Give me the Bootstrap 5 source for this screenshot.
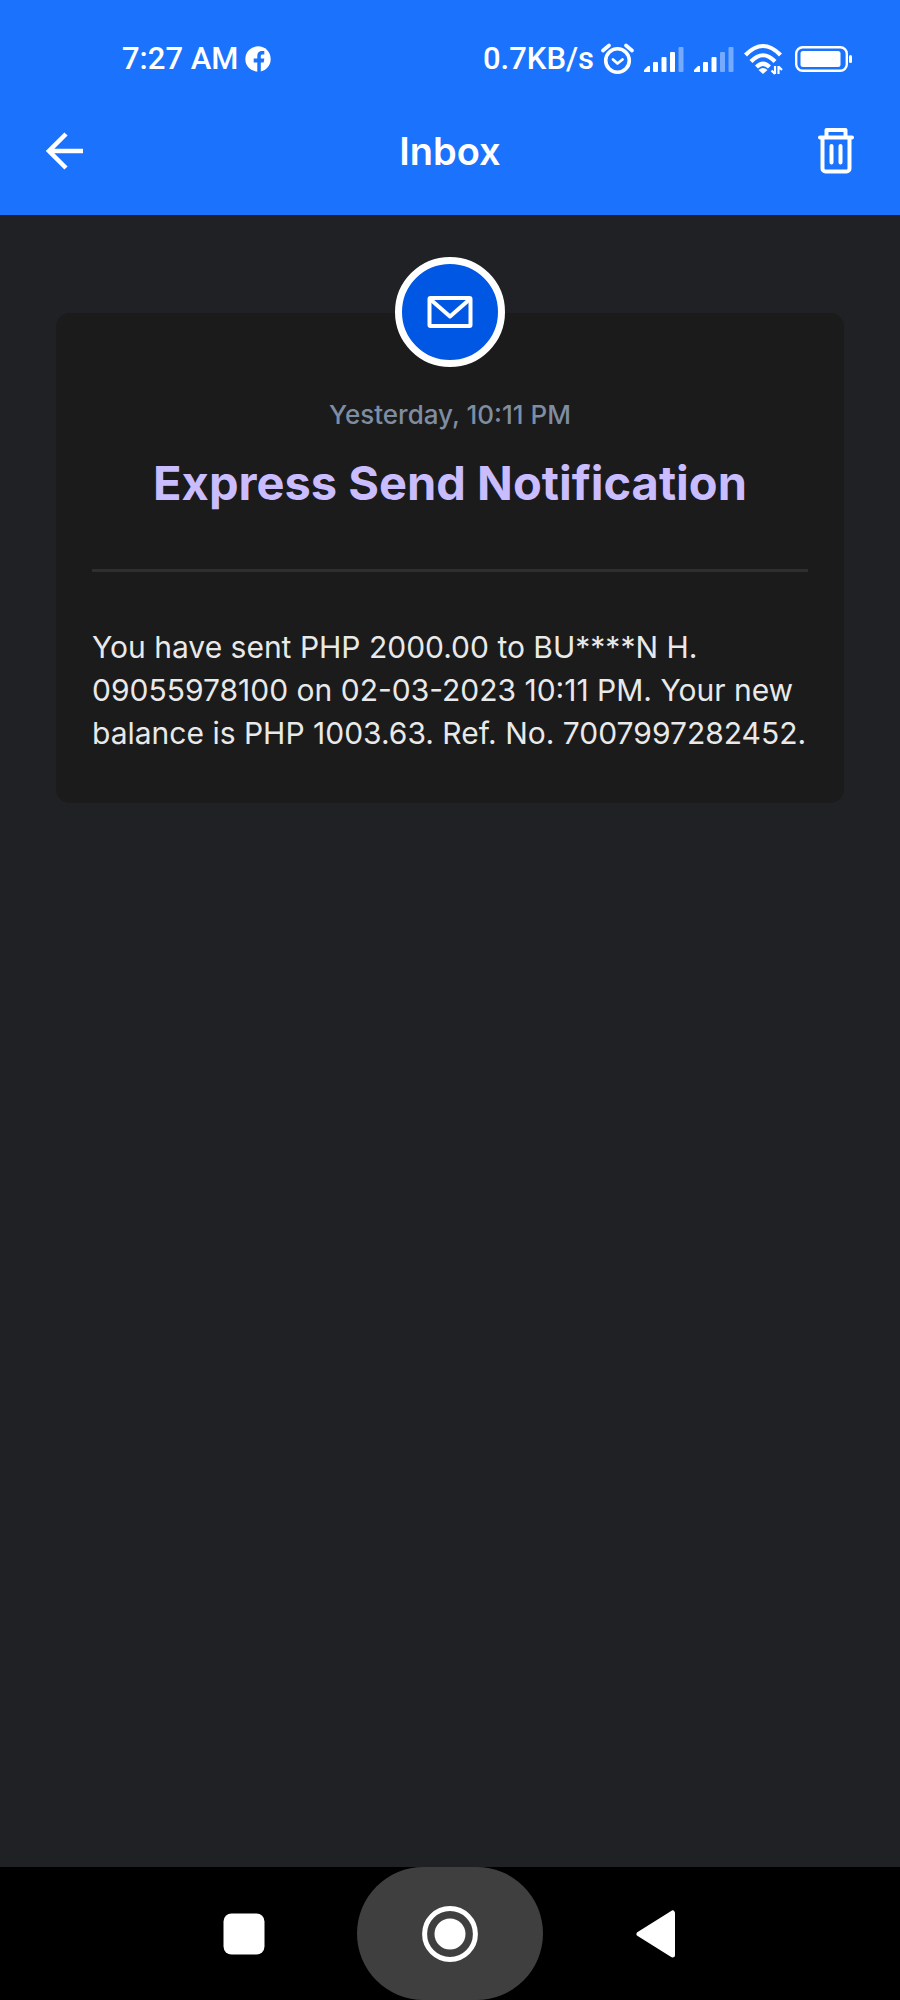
<!DOCTYPE html>
<html lang="en">
<head>
<meta charset="utf-8">
<meta name="viewport" content="width=device-width, initial-scale=1">
<title>Inbox</title>
<link href="https://cdn.jsdelivr.net/npm/bootstrap@5.3.0/dist/css/bootstrap.min.css" rel="stylesheet">
<style>
  body { background: #202124; font-family: Inter, "Liberation Sans", sans-serif; }
  svg { display: block; flex: none; }
  .top-area { background: #1a72fd; color: #fff; }
  .status-bar { padding: 31px 48px 0 122px; font: 500 31px/56px Roboto, "Liberation Sans", sans-serif; }
  .status-group { gap: 10px; }
  .status-text { margin-right: -3px; }
  .title-bar { display: grid; grid-template-columns: 1fr auto 1fr; height: 128px; padding: 0 46px; }
  .title-bar h1 { font-size: 38px; line-height: 44px; font-weight: 600; }
  .plain-btn { background: none; border: 0; padding: 0; color: inherit; }
  .message-area { padding: 98px 56px 48px; }
  .message-card { display: flow-root; background: #1b1b1b; border-radius: 14px; padding: 0 36px 48px; }
  .mail-badge { width: 110px; height: 110px; margin-top: -56px; background: #0057e4; border: 7px solid #fff; }
  .message-date { color: #7f8da3; font-size: 26px; line-height: 32px; font-weight: 500; margin-top: 32px; }
  .message-title { color: #c9bcff; font-size: 47px; line-height: 56px; font-weight: 700; margin-top: 24px; }
  .message-rule { border-top: 3px solid #2f2f2f; opacity: 1; margin: 58px 0 54px; }
  .message-text { color: #e9e9ea; font-size: 30px; line-height: 43px; }
  .system-nav { background: #000; height: 133px; gap: 20px; }
  .system-nav button { width: 186px; }
  .system-nav .pressed { background: #3f3f3f; border-radius: 67px; }
</style>
</head>
<body>
<div class="d-flex flex-column min-vh-100">
  <header class="top-area">
    <div class="status-bar d-flex justify-content-between">
      <div class="status-group d-flex align-items-center">
        <span class="status-text">7:27 AM</span>
        <svg width="26" height="26" viewBox="0 0 26 26" role="img" aria-label="Facebook"><circle cx="13" cy="13" r="12.7" fill="#fff"/><path d="M12.300 26v-9.500H8.700v-4h3.600V10c0-3.600 2-5 4.800-5h2.200v3.500h-1.700c-1.200 0-1.800.6-1.800 1.800v2.200h3.500l-.6 4h-2.900V26z" fill="#1a72fd"/></svg>
      </div>
      <div class="status-group d-flex align-items-center">
        <span class="status-text">0.7KB/s</span>
        <svg width="33" height="32" viewBox="0 0 33 32" fill="none" stroke="#fff" stroke-linecap="round" stroke-linejoin="round" aria-hidden="true"><circle cx="16.500" cy="17.500" r="11.800" stroke-width="3.600"/><path d="M2 7.500 8 2.500M31 7.500 25 2.500" stroke-width="3.600"/><path d="m12 16.500 4.500 4 5-4" stroke-width="2.800"/></svg>
        <svg width="40" height="28" viewBox="0 0 40 28" fill="#fff" aria-hidden="true"><path d="M0 27v-2l4-4h2v6z"/><rect x="9" y="17" width="5" height="10" rx="1"/><rect x="17.500" y="12" width="5" height="15" rx="1"/><rect x="26" y="7" width="5" height="20" rx="1"/><rect x="34.500" y="2" width="5" height="25" rx="1" opacity=".4"/></svg>
        <svg width="40" height="28" viewBox="0 0 40 28" fill="#fff" aria-hidden="true"><path d="M0 27v-2l4-4h2v6z"/><rect x="9" y="17" width="5" height="10" rx="1"/><rect x="17.500" y="12" width="5" height="15" rx="1"/><rect x="26" y="7" width="5" height="20" rx="1" opacity=".4"/><rect x="34.500" y="2" width="5" height="25" rx="1" opacity=".4"/></svg>
        <svg width="41" height="32" viewBox="0 0 41 32" aria-hidden="true"><g fill="none" stroke="#fff" stroke-width="4.200"><path d="M1.500 12Q19 -6 36.500 12"/><path d="M7 18.500Q19 6 31 18.500"/><path d="M12.500 24Q19 17.500 25.500 24"/></g><path d="M14.500 27q4.500-4 9 0L19 31z" fill="#fff"/><path d="M31 23v8M31 31l-3.500-3.500M34.500 31v-8M34.500 23.500l3.500 3.500" fill="none" stroke="#fff" stroke-width="2.200"/></svg>
        <svg width="57" height="28" viewBox="0 0 57 28" aria-hidden="true"><rect x="1.200" y="2.200" width="50.600" height="23.600" rx="6.500" fill="none" stroke="#fff" stroke-width="2.400"/><rect x="5.500" y="6" width="40" height="16" rx="2.500" fill="#fff"/><rect x="54" y="10" width="3" height="8" rx="1.500" fill="#fff"/></svg>
      </div>
    </div>
    <div class="title-bar align-items-center">
      <button class="plain-btn me-auto" aria-label="Back"><svg width="38" height="38" viewBox="0 0 38 38" fill="none" stroke="#fff" stroke-width="4.500"><path d="M37 19H3M20 2 3 19 20 36"/></svg></button>
      <h1 class="m-0">Inbox</h1>
      <button class="plain-btn ms-auto" aria-label="Delete"><svg width="36" height="46" viewBox="0 0 36 46" fill="none" stroke="#fff" stroke-width="4" stroke-linecap="round" stroke-linejoin="round"><path d="M2 9.500h32M8.500 9V2h19v7M4.500 10v30.500a3 3 0 0 0 3 3h21a3 3 0 0 0 3-3V10M13.500 18v16.500M22.500 18v16.500"/></svg></button>
    </div>
  </header>

  <main class="message-area flex-grow-1">
    <article class="message-card">
      <div class="mail-badge rounded-circle mx-auto position-relative d-flex align-items-center justify-content-center">
        <svg width="46" height="32" viewBox="0 0 46 32" fill="none" stroke="#fff" stroke-width="4" stroke-linejoin="round" aria-hidden="true"><rect x="2.500" y="2" width="41" height="28" rx="1"/><path d="m3 3 20 17.500L43 3"/></svg>
      </div>
      <p class="message-date text-center mb-0">Yesterday, 10:11 PM</p>
      <h2 class="message-title text-center mb-0">Express Send Notification</h2>
      <hr class="message-rule">
      <p class="message-text mb-0">You have sent PHP 2000.00 to BU****N H. 09055978100 on 02-03-2023 10:11 PM. Your new balance is PHP 1003.63. Ref. No. 7007997282452.</p>
    </article>
  </main>

  <nav class="system-nav d-flex justify-content-center" aria-label="System">
    <button class="plain-btn d-flex align-items-center justify-content-center" aria-label="Recent apps"><svg width="42" height="42" viewBox="0 0 42 42"><rect x=".5" y=".5" width="41" height="41" rx="8" fill="#fff"/></svg></button>
    <button class="plain-btn pressed d-flex align-items-center justify-content-center" aria-label="Home"><svg width="56" height="56" viewBox="0 0 56 56"><circle cx="28" cy="28" r="25.400" fill="none" stroke="#fff" stroke-width="5"/><circle cx="28" cy="28" r="15.500" fill="#fff"/></svg></button>
    <button class="plain-btn d-flex align-items-center justify-content-center" aria-label="Back to previous screen"><svg width="40" height="48" viewBox="0 0 40 48"><path d="M3 24 36.500 3v42z" fill="#fff" stroke="#fff" stroke-width="5" stroke-linejoin="round"/></svg></button>
  </nav>
</div>
<script src="https://cdn.jsdelivr.net/npm/bootstrap@5.3.0/dist/js/bootstrap.bundle.min.js"></script>
</body>
</html>
